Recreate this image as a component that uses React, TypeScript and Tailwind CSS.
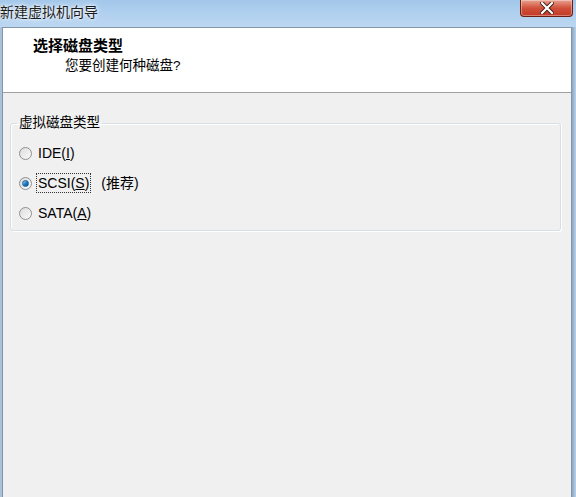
import React from 'react'

const ui = "font-['Liberation_Sans','Noto_Sans_CJK_SC',sans-serif]"

function CloseButton() {
  return (
    <button className="w-[53px] h-[17px] rounded-b-[4px] border border-t-0 border-[#6b1d12] bg-gradient-to-b from-[#e8a18f] via-[#d0503a] to-[#c23a26] shadow-[inset_0_0_0_1px_rgba(255,255,255,0.35)] flex items-center justify-center">
      <svg width="14" height="12" viewBox="0 0 14 12">
        <path d="M2 1 L12 11 M12 1 L2 11" stroke="#3b1a14" strokeWidth="4" strokeLinecap="square" />
        <path d="M2 1 L12 11 M12 1 L2 11" stroke="#ffffff" strokeWidth="2.2" strokeLinecap="square" />
      </svg>
    </button>
  )
}

function Radio({ checked }: { checked?: boolean }) {
  return (
    <span className="w-[13px] h-[13px] rounded-full border border-[#8e8f8f] bg-gradient-to-br from-[#dcdcdc] to-[#fbfbfb] flex items-center justify-center shrink-0">
      {checked && (
        <span className="w-[7px] h-[7px] rounded-full bg-gradient-to-br from-[#9fd3f5] via-[#1d7fc6] to-[#0b4f8c] border border-[#1b5f9e]" />
      )}
    </span>
  )
}

export default function App() {
  return (
    <div className={`${ui} w-[576px] h-[497px] flex flex-col overflow-hidden bg-[#b7d0ea]`}>
      <div className="h-[27px] shrink-0 flex items-start justify-between bg-gradient-to-b from-[#a3c7ea] via-[#b0d0ef] to-[#bcd7f1]">
        <span className="text-[14px] leading-[16px] mt-[4px] text-[#1b1b1b] [text-shadow:0_0_6px_#ffffff,0_0_3px_#ffffff]">
          新建虚拟机向导
        </span>
        <div className="mr-[3px]">
          <CloseButton />
        </div>
      </div>

      <div className="flex-1 flex">
        <div className="w-[2px] bg-[#a9c1da]" />
        <div className="flex-1 flex flex-col border border-b-0 border-[#8595a8] bg-[#f0f0f0]">
          <div className="h-[65px] shrink-0 bg-white border-b border-[#a0a0a0] flex flex-col pt-[10px] pl-[30px]">
            <span className="text-[15px] leading-[16px] font-bold text-black">选择磁盘类型</span>
            <span className="text-[13.5px] leading-[16px] mt-[4px] ml-[32px] text-black">您要创建何种磁盘?</span>
          </div>

          <div className="pt-[23px] pl-[7px] pr-[10px]">
            <fieldset className="border border-[#d5dfe5] rounded-[3px] shadow-[inset_1px_1px_0_#ffffff,1px_1px_0_#ffffff] pt-[15px] pb-[9px] flex flex-col gap-[14px]">
              <legend className="ml-[6px] px-[2px] text-[13.5px] leading-[14px] text-black">虚拟磁盘类型</legend>
              <div className="h-[16px] pl-[8px] flex items-center gap-[6px] text-[14px] text-black">
                <Radio />
                <span>
                  IDE(<span className="underline">I</span>)
                </span>
              </div>
              <div className="h-[16px] pl-[8px] flex items-center gap-[5px] text-[14px] text-black">
                <Radio checked />
                <span className="outline-1 outline-dotted outline-[#333] px-[1px] leading-[18px]">
                  SCSI(<span className="underline">S</span>)
                </span>
                <span className="ml-[6px]">(推荐)</span>
              </div>
              <div className="h-[16px] pl-[8px] flex items-center gap-[6px] text-[14px] text-black">
                <Radio />
                <span>
                  SATA(<span className="underline">A</span>)
                </span>
              </div>
            </fieldset>
          </div>
        </div>
        <div className="w-[4px] bg-gradient-to-r from-[#8da7c2] to-[#b9d0e8]" />
      </div>
    </div>
  )
}
